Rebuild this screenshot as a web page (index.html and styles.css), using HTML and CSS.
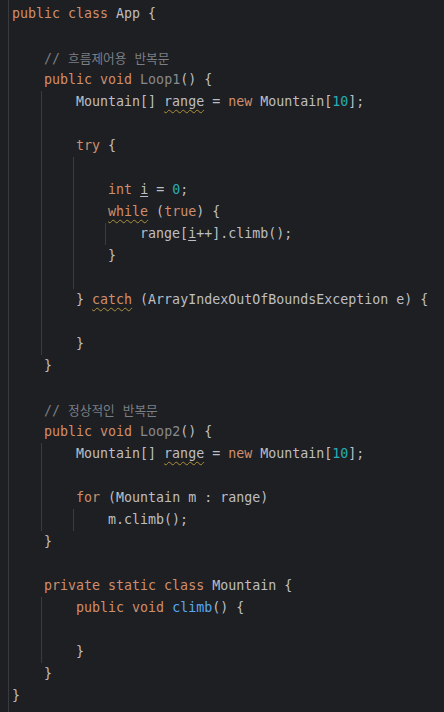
FILE: index.html
```html
<!DOCTYPE html>
<html lang="ko">
<head>
<meta charset="utf-8">
<title>App.java</title>
<link rel="stylesheet" href="styles.css">
</head>
<body>
<div class="editor">
<div class="ln"><span class="kw">public class</span> App {</div>
<div class="ln"> </div>
<div class="ln cm">    // <span class="ko">흐름제어용</span> <span class="ko">반복문</span></div>
<div class="ln">    <span class="kw">public void</span> <span class="unused">Loop1</span>() {</div>
<div class="g4">
<div class="ln">        Mountain[] <span class="warn">range</span> = <span class="kw">new</span> Mountain[<span class="num">10</span>];</div>
<div class="ln"> </div>
<div class="ln">        <span class="kw">try</span> {</div>
<div class="g8">
<div class="ln"> </div>
<div class="ln">            <span class="kw">int</span> <span class="reas">i</span> = <span class="num">0</span>;</div>
<div class="ln">            <span class="kw warn">while</span> (<span class="kw">true</span>) {</div>
<div class="g12">
<div class="ln">                range[<span class="reas">i</span>++].climb();</div>
</div>
<div class="ln">            }</div>
<div class="ln"> </div>
</div>
<div class="ln">        } <span class="kw warn">catch</span> (ArrayIndexOutOfBoundsException e) {</div>
<div class="ln"> </div>
<div class="ln">        }</div>
</div>
<div class="ln">    }</div>
<div class="ln"> </div>
<div class="ln cm">    // <span class="ko">정상적인</span> <span class="ko">반복문</span></div>
<div class="ln">    <span class="kw">public void</span> <span class="unused">Loop2</span>() {</div>
<div class="g4">
<div class="ln">        Mountain[] <span class="warn">range</span> = <span class="kw">new</span> Mountain[<span class="num">10</span>];</div>
<div class="ln"> </div>
<div class="ln">        <span class="kw">for</span> (Mountain m : range)</div>
<div class="g8">
<div class="ln">            m.climb();</div>
</div>
</div>
<div class="ln">    }</div>
<div class="ln"> </div>
<div class="ln">    <span class="kw">private static class</span> Mountain {</div>
<div class="g4">
<div class="ln">        <span class="kw">public void</span> <span class="fn">climb</span>() {</div>
<div class="ln"> </div>
<div class="ln">        }</div>
</div>
<div class="ln">    }</div>
<div class="ln">}</div>
</div>
</body>
</html>
```
FILE: styles.css
```css
html, body {
  margin: 0;
  padding: 0;
  background: #1e1f22;
}

body {
  --guide: #393b40;
  overflow: hidden;
}

.editor {
  box-sizing: border-box;
  min-height: 100vh;
  margin-left: 8px;
  padding: 3px 0 0 3px;
  border-left: 1px solid var(--guide);
  font-family: "DejaVu Sans Mono", "Noto Sans CJK KR", monospace;
  font-size: 13.3px;
  color: #bcbec4;
}

.ln {
  height: 22px;
  line-height: 22px;
  white-space: pre;
}

.g4, .g8, .g12 {
  background-image: linear-gradient(var(--guide), var(--guide));
  background-repeat: no-repeat;
  background-size: 1px 100%;
}
.g4 { background-position: 29px 0; }
.g8 { background-position: 61px 0; }
.g12 { background-position: 93px 0; }

.kw { color: #cf8e6d; }
.cm { color: #7a7e85; }
.num { color: #2aacb8; }
.fn { color: #56a8f5; }
.unused { color: #868a91; }

.ko {
  font-family: "Noto Sans CJK KR", sans-serif;
  font-size: 12.7px;
}

.warn {
  text-decoration: underline wavy #b0913f;
  text-decoration-thickness: 1px;
  text-underline-offset: 3px;
}

.reas {
  text-decoration: underline solid #bcbec4;
  text-decoration-thickness: 1px;
  text-underline-offset: 2px;
}
```
